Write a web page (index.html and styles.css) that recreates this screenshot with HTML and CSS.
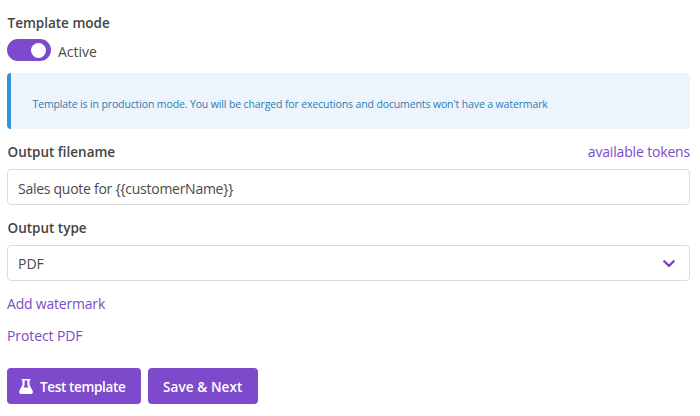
FILE: index.html
```html
<!DOCTYPE html>
<html lang="en">
<head>
<meta charset="utf-8">
<title>Template settings</title>
<link rel="stylesheet" href="styles.css">
</head>
<body>
<main class="settings">
  <h2 class="label"><span class="t-mode">Template mode</span></h2>
  <div class="toggle-row">
    <span class="switch"><span class="knob"></span></span>
    <span class="t-active">Active</span>
  </div>
  <div class="notice"><span class="t-notice">Template is in production mode. You will be charged for executions and documents won't have a watermark</span></div>
  <div class="field-head">
    <span class="label t-filename">Output filename</span>
    <a class="link t-tokens">available tokens</a>
  </div>
  <div class="control filename"><span class="t-value">Sales quote for {{customerName}}</span></div>
  <div class="field-head type-head"><span class="label t-type">Output type</span></div>
  <div class="control">
    <span class="t-pdf">PDF</span>
    <svg class="chevron" width="12" height="8" viewBox="0 0 12 8"><path d="M1.3 1.3 6 5.900l4.700-4.600" fill="none" stroke="currentColor" stroke-width="2.300" stroke-linecap="round" stroke-linejoin="round"/></svg>
  </div>
  <a class="link extra t-water">Add watermark</a>
  <a class="link extra t-protect">Protect PDF</a>
  <div class="actions">
    <span class="button test"><svg class="flask" width="14" height="15" viewBox="0 0 14 15"><path fill="currentColor" fill-rule="evenodd" d="M3.200 0h7.600q.7 0 .7.800t-.7.800h-.3v4.200l3.200 6.300Q14.600 15 11.800 15H2.200Q-.6 15 .3 12.100l3.200-6.300V1.600h-.3q-.7 0-.7-.8t.7-.8zM5.600 1.600v4.600L4.500 8.600h5L8.400 6.200V1.600z"/></svg><span class="t-test">Test template</span></span>
    <span class="button save"><span class="t-save">Save &amp; Next</span></span>
  </div>
</main>
</body>
</html>
```
FILE: styles.css
```css
* { box-sizing: border-box; }
body {
  margin: 0;
  background: #fff;
  color: #4a4a4a;
  font: 14px/20px "Segoe UI", "Open Sans", "Noto Sans", sans-serif;
  white-space: nowrap;
}
.settings {
  display: flex;
  flex-direction: column;
  align-items: stretch;
  padding: 13px 10px 0 7px;
}
.label { margin: 0; padding-left: 0.5px; font-size: 13.5px; font-weight: 600; line-height: 20px; color: #444; }
.toggle-row { display: flex; flex: none; align-items: flex-start; gap: 7px; height: 34px; padding-top: 6px; }
.switch { display: flex; justify-content: flex-end; width: 44px; height: 22px; padding: 3.5px 5px; border-radius: 11px; background: #7d4acb; }
.knob { width: 15px; height: 15px; border-radius: 50%; background: #fff; }
.t-active { margin-top: 3px; }
.notice {
  height: 56px;
  margin-top: 6px;
  padding-left: 21.5px;
  border-left: 4px solid #2b95d6;
  border-radius: 4px;
  background: #edf4fc;
  color: #2b7cb3;
  font-size: 10.5px;
  letter-spacing: -0.128px;
  line-height: 62px;
}
.field-head { display: flex; justify-content: space-between; height: 20px; margin-top: 13px; }
.type-head { margin-top: 13px; }
.link { color: #7d4acb; }
.control {
  display: flex;
  align-items: center;
  justify-content: space-between;
  height: 36px;
  margin-top: 7px;
  padding: 2px 14px 0 10px;
  border: 1px solid #dbdbdb;
  border-radius: 4px;
}
.filename { padding-top: 4px; }
.chevron { color: #7440c5; }
.extra { flex: none; height: 20px; margin-top: 13px; }
.t-tokens { letter-spacing: -0.17px; }
.t-value { letter-spacing: -0.27px; }
.t-water { letter-spacing: -0.2px; }
.t-protect { margin-top: 12px; letter-spacing: -0.1px; }
.t-test { letter-spacing: -0.35px; }
.actions { display: flex; gap: 7px; margin-top: 22px; }
.button {
  display: flex;
  align-items: center;
  height: 36px;
  padding: 2px 0 0 12px;
  border-radius: 4px;
  background: #7d4acb;
  color: #fff;
  font-size: 13.5px;
  font-weight: 600;
}
.flask { margin-bottom: 2px; }
.test { width: 134px; gap: 7px; }
.save { width: 110px; padding-left: 15px; letter-spacing: 0.1px; }
```
